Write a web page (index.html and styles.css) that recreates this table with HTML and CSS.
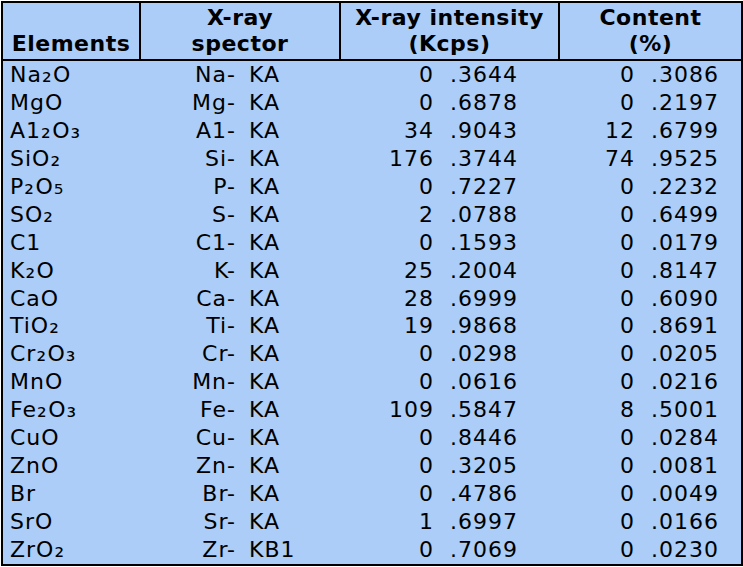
FILE: index.html
```
<!DOCTYPE html>
<html>
<head>
<meta charset="utf-8">
<link rel="stylesheet" href="styles.css">
</head>
<body>
<div class="tbl">
  <div class="th th-el">Elements</div>
  <div class="th th-sp">X-ray<br>spector</div>
  <div class="th th-in">X-ray intensity<br>(Kcps)</div>
  <div class="th th-ct">Content<br>(%)</div>

  <div class="el">Na<span class="sb">₂</span>O</div><div class="sym">Na-</div><div class="ln">KA</div><div class="int">0</div><div class="dec">.3644</div><div class="int">0</div><div class="dec">.3086</div>
  <div class="el">MgO</div><div class="sym">Mg-</div><div class="ln">KA</div><div class="int">0</div><div class="dec">.6878</div><div class="int">0</div><div class="dec">.2197</div>
  <div class="el">A1<span class="sb">₂</span>O<span class="sb">₃</span></div><div class="sym">A1-</div><div class="ln">KA</div><div class="int">34</div><div class="dec">.9043</div><div class="int">12</div><div class="dec">.6799</div>
  <div class="el">SiO<span class="sb">₂</span></div><div class="sym">Si-</div><div class="ln">KA</div><div class="int">176</div><div class="dec">.3744</div><div class="int">74</div><div class="dec">.9525</div>
  <div class="el">P<span class="sb">₂</span>O<span class="sb">₅</span></div><div class="sym">P-</div><div class="ln">KA</div><div class="int">0</div><div class="dec">.7227</div><div class="int">0</div><div class="dec">.2232</div>
  <div class="el">SO<span class="sb">₂</span></div><div class="sym">S-</div><div class="ln">KA</div><div class="int">2</div><div class="dec">.0788</div><div class="int">0</div><div class="dec">.6499</div>
  <div class="el">C1</div><div class="sym">C1-</div><div class="ln">KA</div><div class="int">0</div><div class="dec">.1593</div><div class="int">0</div><div class="dec">.0179</div>
  <div class="el">K<span class="sb">₂</span>O</div><div class="sym">K-</div><div class="ln">KA</div><div class="int">25</div><div class="dec">.2004</div><div class="int">0</div><div class="dec">.8147</div>
  <div class="el">CaO</div><div class="sym">Ca-</div><div class="ln">KA</div><div class="int">28</div><div class="dec">.6999</div><div class="int">0</div><div class="dec">.6090</div>
  <div class="el">TiO<span class="sb">₂</span></div><div class="sym">Ti-</div><div class="ln">KA</div><div class="int">19</div><div class="dec">.9868</div><div class="int">0</div><div class="dec">.8691</div>
  <div class="el">Cr<span class="sb">₂</span>O<span class="sb">₃</span></div><div class="sym">Cr-</div><div class="ln">KA</div><div class="int">0</div><div class="dec">.0298</div><div class="int">0</div><div class="dec">.0205</div>
  <div class="el">MnO</div><div class="sym">Mn-</div><div class="ln">KA</div><div class="int">0</div><div class="dec">.0616</div><div class="int">0</div><div class="dec">.0216</div>
  <div class="el">Fe<span class="sb">₂</span>O<span class="sb">₃</span></div><div class="sym">Fe-</div><div class="ln">KA</div><div class="int">109</div><div class="dec">.5847</div><div class="int">8</div><div class="dec">.5001</div>
  <div class="el">CuO</div><div class="sym">Cu-</div><div class="ln">KA</div><div class="int">0</div><div class="dec">.8446</div><div class="int">0</div><div class="dec">.0284</div>
  <div class="el">ZnO</div><div class="sym">Zn-</div><div class="ln">KA</div><div class="int">0</div><div class="dec">.3205</div><div class="int">0</div><div class="dec">.0081</div>
  <div class="el">Br</div><div class="sym">Br-</div><div class="ln">KA</div><div class="int">0</div><div class="dec">.4786</div><div class="int">0</div><div class="dec">.0049</div>
  <div class="el">SrO</div><div class="sym">Sr-</div><div class="ln">KA</div><div class="int">1</div><div class="dec">.6997</div><div class="int">0</div><div class="dec">.0166</div>
  <div class="el">ZrO<span class="sb">₂</span></div><div class="sym">Zr-</div><div class="ln">KB1</div><div class="int">0</div><div class="dec">.7069</div><div class="int">0</div><div class="dec">.0230</div>
</div>
</body>
</html>
```
FILE: styles.css
```
html, body {
  margin: 0;
  padding: 0;
  background: #ffffff;
}

body {
  padding: 1px;
}

.tbl {
  display: grid;
  grid-template-columns: 138px 95px 105px 93px 126px 75px 106px;
  grid-template-rows: 58px;
  grid-auto-rows: 27.94px;
  width: 738px;
  border: 2px solid #000;
  background: #abcdf8;
  color: #000;
  font-family: "DejaVu Sans", Verdana, sans-serif;
  font-size: 22px;
}

.th {
  box-sizing: border-box;
  border-bottom: 2px solid #000;
  border-right: 2px solid #000;
  padding: 2px 0;
  font-weight: bold;
  line-height: 26px;
  letter-spacing: 0.5px;
  text-align: center;
  display: flex;
  flex-direction: column;
  justify-content: flex-end;
  white-space: nowrap;
}

.th-sp,
.th-in,
.th-ct {
  grid-column: span 2;
}

.th-ct {
  border-right: none;
}

.el,
.sym,
.ln,
.int,
.dec {
  line-height: 27.94px;
  letter-spacing: 1px;
  white-space: nowrap;
  overflow: hidden;
}

.el {
  padding-left: 7px;
}

.sb {
  font-size: 24px;
  letter-spacing: 1.5px;
}

.sym {
  text-align: right;
}

.ln {
  padding-left: 13px;
}

.int {
  text-align: right;
}

.dec {
  padding-left: 16px;
}
```
